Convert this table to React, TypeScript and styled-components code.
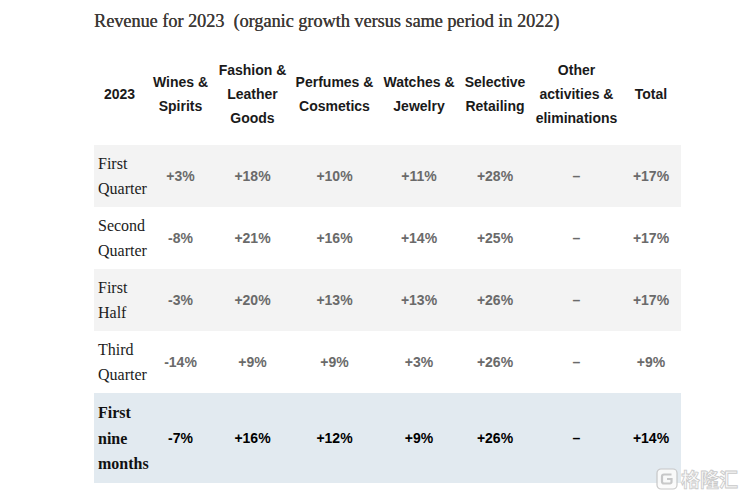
import React from "react";
import styled, { createGlobalStyle } from "styled-components";

const Global = createGlobalStyle`
  html, body { margin: 0; padding: 0; background: #ffffff; }
  body { width: 742px; height: 496px; overflow: hidden; }
`;

const Page = styled.div`
  position: relative;
  width: 742px;
  height: 496px;
  box-sizing: border-box;
  padding: 9px 0 0 94px;
`;

const Title = styled.h1`
  margin: 0;
  font-family: "Liberation Serif", "Times New Roman", serif;
  font-size: 18.2px;
  line-height: 24px;
  font-weight: normal;
  color: #3d3936;
  text-shadow: 0.3px 0 0 #3d3936;
  white-space: pre;
`;

const Table = styled.table`
  margin-top: 17px;
  width: 587px;
  table-layout: fixed;
  border-collapse: collapse;
  border-spacing: 0;
`;

const HeadCell = styled.th`
  padding: 8px 2px 15px;
  font-family: "Liberation Sans", Arial, sans-serif;
  font-size: 14px;
  line-height: 24px;
  font-weight: bold;
  color: #1a1a1a;
  text-align: center;
  vertical-align: middle;
`;

const Row = styled.tr<{ $tone: "gray" | "white" | "blue" }>`
  background: ${(p) =>
    p.$tone === "gray" ? "#f3f3f3" : p.$tone === "blue" ? "#e2eaf0" : "#ffffff"};
`;

const LabelCell = styled.td<{ $strong?: boolean; $tall?: boolean }>`
  height: ${(p) => (p.$tall ? "88px" : "62px")};
  box-sizing: border-box;
  padding: ${(p) => (p.$tall ? "7px 0 6px 4px" : "6px 0 6px 4px")};
  font-family: "Liberation Serif", "Times New Roman", serif;
  font-size: 16px;
  line-height: ${(p) => (p.$tall ? "25.5px" : "25px")};
  font-weight: ${(p) => (p.$strong ? "bold" : "normal")};
  color: ${(p) => (p.$strong ? "#111111" : "#1c1c1c")};
  text-align: left;
  vertical-align: middle;
`;

const ValueCell = styled.td<{ $strong?: boolean }>`
  padding: 0 2px;
  font-family: "Liberation Sans", Arial, sans-serif;
  font-size: 14px;
  font-weight: bold;
  color: ${(p) => (p.$strong ? "#000000" : "#6a6a6a")};
  text-align: center;
  vertical-align: middle;
`;

const Watermark = styled.div`
  position: absolute;
  right: 4px;
  bottom: 6px;
  display: flex;
  align-items: center;
  gap: 3px;
  opacity: 0.9;
`;

const WatermarkText = styled.span`
  font-family: "Noto Sans CJK SC", sans-serif;
  font-size: 19px;
  line-height: 22px;
  font-weight: bold;
  color: #fbfbfb;
  -webkit-text-stroke: 0.8px #c4c4c4;
`;

const widths = [51, 71, 73, 91, 78, 74, 89, 60];

const headers: string[][] = [
  ["2023"],
  ["Wines &", "Spirits"],
  ["Fashion &", "Leather", "Goods"],
  ["Perfumes &", "Cosmetics"],
  ["Watches &", "Jewelry"],
  ["Selective", "Retailing"],
  ["Other", "activities &", "eliminations"],
  ["Total"],
];

type RowData = {
  label: string[];
  values: string[];
  tone: "gray" | "white" | "blue";
  strong?: boolean;
};

const rows: RowData[] = [
  { label: ["First", "Quarter"], values: ["+3%", "+18%", "+10%", "+11%", "+28%", "–", "+17%"], tone: "gray" },
  { label: ["Second", "Quarter"], values: ["-8%", "+21%", "+16%", "+14%", "+25%", "–", "+17%"], tone: "white" },
  { label: ["First", "Half"], values: ["-3%", "+20%", "+13%", "+13%", "+26%", "–", "+17%"], tone: "gray" },
  { label: ["Third", "Quarter"], values: ["-14%", "+9%", "+9%", "+3%", "+26%", "–", "+9%"], tone: "white" },
  { label: ["First", "nine", "months"], values: ["-7%", "+16%", "+12%", "+9%", "+26%", "–", "+14%"], tone: "blue", strong: true },
];

const Lines = ({ lines }: { lines: string[] }) => (
  <>
    {lines.map((l, i) => (
      <React.Fragment key={i}>
        {i > 0 && <br />}
        {l}
      </React.Fragment>
    ))}
  </>
);

export default function App() {
  return (
    <Page>
      <Global />
      <Title>{"Revenue for 2023  (organic growth versus same period in 2022)"}</Title>
      <Table>
        <colgroup>
          {widths.map((w, i) => (
            <col key={i} style={{ width: w }} />
          ))}
        </colgroup>
        <thead>
          <tr>
            {headers.map((h, i) => (
              <HeadCell key={i}>
                <Lines lines={h} />
              </HeadCell>
            ))}
          </tr>
        </thead>
        <tbody>
          {rows.map((r, i) => (
            <Row key={i} $tone={r.tone}>
              <LabelCell $strong={r.strong} $tall={r.label.length > 2}>
                <Lines lines={r.label} />
              </LabelCell>
              {r.values.map((v, j) => (
                <ValueCell key={j} $strong={r.strong}>
                  {v}
                </ValueCell>
              ))}
            </Row>
          ))}
        </tbody>
      </Table>
      <Watermark>
        <svg width="22" height="22" viewBox="0 0 22 22">
          <rect x="1" y="1" width="20" height="20" rx="4" fill="#fbfbfb" stroke="#c4c4c4" strokeWidth="1.2" />
          <path
            d="M15.5 6.5 H8 a2 2 0 0 0 -2 2 V13.5 a2 2 0 0 0 2 2 H14 a1.5 1.5 0 0 0 1.5 -1.5 V11 H11"
            fill="none"
            stroke="#c4c4c4"
            strokeWidth="2.2"
          />
        </svg>
        <WatermarkText>格隆汇</WatermarkText>
      </Watermark>
    </Page>
  );
}
